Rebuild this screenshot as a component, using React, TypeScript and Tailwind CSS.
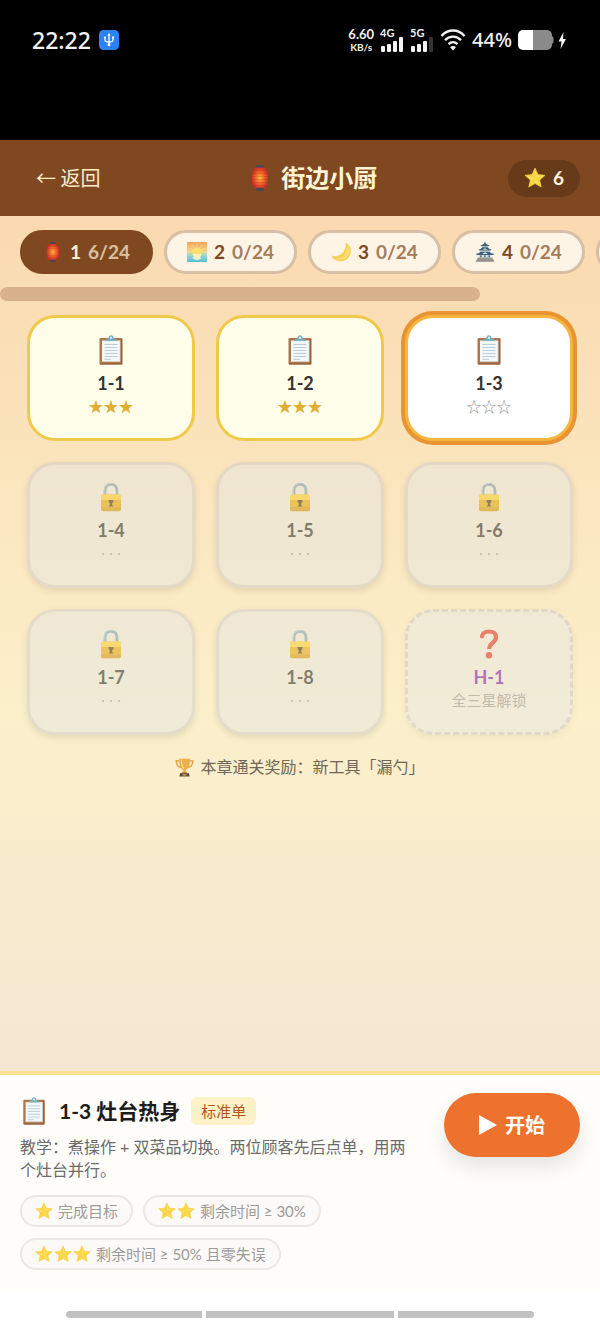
import { useId, useState } from "react";
import clsx from "clsx";

type IconProps = { className?: string };

/* ---------- icons ---------- */

function Lantern({ className }: IconProps) {
  const id = useId();
  return (
    <svg viewBox="0 0 24 24" className={className} aria-hidden>
      <defs>
        <radialGradient id={id} cx="50%" cy="50%" r="52%">
          <stop offset="0%" stopColor="#ffc24d" />
          <stop offset="40%" stopColor="#f5792d" />
          <stop offset="100%" stopColor="#cf2f24" />
        </radialGradient>
      </defs>
      <rect x="8.500" y="0.300" width="7" height="2.500" rx="0.600" fill="#3f4a5a" />
      <path d="M7.500 2.400h9c2 1.500 3 5 3 9.600s-1 8.100-3 9.600h-9c-2-1.500-3-5-3-9.600s1-8.100 3-9.600z" fill={`url(#${id})`} />
      <path
        d="M6 5h12M5 7.800h14M4.600 10.600h14.800M4.600 13.400h14.800M5 16.200h14M6 19h12"
        stroke="#b3241c"
        strokeWidth="0.400"
        opacity="0.600"
      />
      <rect x="8.500" y="21.300" width="7" height="2.400" rx="0.600" fill="#3f4a5a" />
    </svg>
  );
}

function Sunrise({ className }: IconProps) {
  const id = useId();
  return (
    <svg viewBox="0 0 24 24" className={className} aria-hidden>
      <defs>
        <linearGradient id={id} x1="0" y1="0" x2="0" y2="1">
          <stop offset="0%" stopColor="#f3a35c" />
          <stop offset="45%" stopColor="#fbd07c" />
          <stop offset="62%" stopColor="#a5dcc8" />
          <stop offset="100%" stopColor="#55bfd6" />
        </linearGradient>
      </defs>
      <rect width="24" height="24" rx="1" fill={`url(#${id})`} />
      <path
        d="M12 12V2M12 12L6 3M12 12l6-9M12 12L2 7M12 12l10-5M12 12H1.500M12 12h10.500"
        stroke="#fff0a8"
        strokeWidth="0.900"
        opacity="0.700"
      />
      <circle cx="12" cy="12.500" r="5.500" fill="#ffe169" />
      <path d="M6.500 14.500h11l-1.500 3.500 1 2-5 2-5-2 1-2z" fill="#fdf6cf" opacity="0.850" />
    </svg>
  );
}

function Moon({ className }: IconProps) {
  return (
    <svg viewBox="0 0 24 24" className={className} aria-hidden>
      <path d="M17.500.500c4 2 6.300 5.800 6.300 10.200 0 7-5.500 12.300-12.300 12.300C6.500 23 2.200 20.600 0 16.300c2.200.900 4.400 1.100 6.500.700C13.800 15.700 18.700 9 17.500.500z" fill="#f7cf4f" />
      <path d="M19.300 3.500c2 2 3 4.300 3 7.200 0 6-4.700 10.500-10.800 10.500-2.800 0-5.200-.8-7.200-2.300 9.300 1.500 16.300-5 15-15.400z" fill="#fbdf74" />
    </svg>
  );
}

function Castle({ className }: IconProps) {
  return (
    <svg viewBox="0 0 24 24" className={className} aria-hidden>
      <path d="M8 4h8v3H8zM6.500 9h11v3H6.500zM4.500 14.500h15v4h-15z" fill="#cfdadf" />
      <path d="M6.500 4.200C9.300 3.800 10.700 2 12 0c1.300 2 2.700 3.800 5.500 4.200l-1.500 1H8z" fill="#3b6078" />
      <path d="M4 9c2.500-.3 4-1.200 4.800-2.700h6.400C16 7.800 17.500 8.700 20 9l-1.500 1.200h-13z" fill="#3b6078" />
      <path d="M.8 14.300C4 14 5.500 13 6.500 11.700h11c1 1.300 2.500 2.300 5.700 2.600L21.500 15.700h-19z" fill="#3b6078" />
      <path d="M9 9.200l3-1.700 3 1.700zM8.500 14.500l3.500-2.200 3.500 2.200z" fill="#dbe4e8" />
      <path d="M7 16v2.500M12 16v2.500M17 16v2.500" stroke="#3b6078" strokeWidth="1.500" />
      <path d="M3.500 18.500h17L23.500 24H.500z" fill="#a5a59e" />
      <path d="M2.500 20.300h19M1.500 22.200h21M6 18.500v2M10 18.500v2M14 18.500v2M18 18.500v2M4 20.300v2M8 20.300v2M12 20.300v2M16 20.300v2M20 20.300v2" stroke="#777973" strokeWidth="0.500" />
    </svg>
  );
}

function Star({ className }: IconProps) {
  return (
    <svg viewBox="0 0 24 24" className={className} aria-hidden>
      <path
        d="M12 1.200l3.200 7.100 7.700.8-5.800 5.200 1.700 7.600L12 18l-6.800 3.900 1.700-7.600L1.100 9.100l7.700-.8z"
        fill="#fcd53f"
        stroke="#f8cb3a"
        strokeWidth="0.800"
        strokeLinejoin="round"
      />
      <path d="M12 3l2.400 6L12 12zM12 12L3 9.800l5 4.500zM12 12l5.200 8L12 17zM12 12l9-2.200-6-.8z" fill="#fbe27a" opacity="0.700" />
    </svg>
  );
}

function Clipboard({ className }: IconProps) {
  return (
    <svg viewBox="0 0 24 30" className={className} aria-hidden>
      <rect x="0.500" y="3" width="23" height="26.500" rx="1.200" fill="#b0764a" />
      <path d="M22.500 4v24.800H1" fill="none" stroke="#925f3b" strokeWidth="1.200" />
      <path d="M3 5.500h18v21H3z" fill="#f4f8fb" />
      <path d="M21 5.500v21H3" fill="none" stroke="#cbd8e0" strokeWidth="0.800" />
      <path d="M5.500 9.500h13M5.500 12.500h13M5.500 15.500h13M5.500 18.500h13M5.500 21.500h13M5.500 24.300h6.500" stroke="#b3c7d8" strokeWidth="0.900" />
      <path d="M6.500 6c0-1.700 1-2.400 2.700-2.400C9.500 1.500 10.500.300 12 .300s2.500 1.200 2.800 3.300c1.700 0 2.700.7 2.700 2.400z" fill="#79b1c4" />
      <circle cx="12" cy="2.800" r="1.100" fill="#e8f3f6" />
    </svg>
  );
}

function Lock({ className }: IconProps) {
  return (
    <svg viewBox="0 0 24 30" className={className} aria-hidden>
      <path d="M6 15V8.500C6 4.700 8.300 2.300 12 2.300s6 2.400 6 6.200V15" fill="none" stroke="#7fa3b3" strokeWidth="2.800" />
      <path d="M5.200 13V8.500C5.200 4.500 7.800 1.600 12 1.600" fill="none" stroke="#a9c6d0" strokeWidth="1" />
      <rect x="2" y="12.500" width="20" height="16.500" rx="2.500" fill="#e2aa18" />
      <path d="M2 18v-3c0-1.600 1-2.500 2.500-2.500h15c1.600 0 2.500 1 2.500 2.500v3z" fill="#f9ce38" />
      <path d="M2 25.500h20V27c0 1.400-1 2.300-2.500 2.300h-15C3 29.300 2 28.400 2 27z" fill="#d0981a" />
      <path d="M9.600 18h4.800v2l-1.200 1v2l1.200 1.500H9.600l1.200-1.500v-2l-1.200-1z" fill="#4a3a1c" />
    </svg>
  );
}

function Question({ className }: IconProps) {
  return (
    <svg viewBox="0 0 24 30" className={className} aria-hidden>
      <path
        d="M5 7.500C5.500 4 8.200 2.500 12 2.500c4.300 0 7 2.100 7 5.500 0 3-1.500 4.500-3.600 6.200-1.900 1.500-3 3-3.200 6"
        fill="none"
        stroke="#dc3a30"
        strokeWidth="4.200"
      />
      <circle cx="12" cy="26.300" r="3.200" fill="#dc3a30" />
      <circle cx="5" cy="7.500" r="2.100" fill="#dc3a30" />
    </svg>
  );
}

function Trophy({ className }: IconProps) {
  return (
    <svg viewBox="0 0 24 24" className={className} aria-hidden>
      <path d="M6 3.500H1.500c0 5 2 8 6.500 8.500M18 3.500h4.500c0 5-2 8-6.500 8.500" fill="none" stroke="#dc9c38" strokeWidth="1.600" />
      <path d="M5 1h14c0 8-1.700 13-5.500 14.300V18h-3v-2.700C6.700 14 5 9 5 1z" fill="#eeb04b" />
      <path d="M8 2c0 5.500.8 9 3 11.500" fill="none" stroke="#fbdc94" strokeWidth="1.500" />
      <path d="M9 17.500h6l1 2H8z" fill="#cf8d2f" />
      <path d="M6.500 19.300h11l1 4.200h-13z" fill="#5a4638" />
      <path d="M9.500 20.700h5v1.500h-5z" fill="#e9b85a" />
    </svg>
  );
}

function Signal({ weak }: { weak?: boolean }) {
  return (
    <svg viewBox="0 0 24 15" className="h-[15px] w-6" aria-hidden>
      <rect x="1" y="9" width="4" height="6" rx="1" fill="#f2f2f2" />
      <rect x="7" y="7" width="4" height="8" rx="1" fill="#f2f2f2" />
      <rect x="13" y="4" width="4" height="11" rx="1" fill="#f2f2f2" />
      <rect x="19" y="0" width="4" height="15" rx="1" fill={weak ? "#333" : "#f2f2f2"} />
    </svg>
  );
}

/* ---------- data ---------- */

const CHAPTERS = [
  { no: 1, done: 6, Icon: Lantern },
  { no: 2, done: 0, Icon: Sunrise },
  { no: 3, done: 0, Icon: Moon },
  { no: 4, done: 0, Icon: Castle },
];

type Level = { id: string; state: "done" | "open" | "locked" | "hidden"; note: string };

const LEVELS: Level[] = [
  { id: "1-1", state: "done", note: "★★★" },
  { id: "1-2", state: "done", note: "★★★" },
  { id: "1-3", state: "open", note: "☆☆☆" },
  { id: "1-4", state: "locked", note: "· · ·" },
  { id: "1-5", state: "locked", note: "· · ·" },
  { id: "1-6", state: "locked", note: "· · ·" },
  { id: "1-7", state: "locked", note: "· · ·" },
  { id: "1-8", state: "locked", note: "· · ·" },
  { id: "H-1", state: "hidden", note: "全三星解锁" },
];

const GOALS = [
  { stars: 1, text: "完成目标" },
  { stars: 2, text: "剩余时间 ≥ 30%" },
  { stars: 3, text: "剩余时间 ≥ 50% 且零失误" },
];

const LEVEL_ICON = { done: Clipboard, open: Clipboard, locked: Lock, hidden: Question };

/* ---------- sections ---------- */

function StatusBar() {
  return (
    <div className="flex h-[140px] items-start justify-between bg-black px-8 pt-[25px] font-['Noto_Sans',sans-serif] text-[#f2f2f2]">
      <div className="flex h-[30px] items-center gap-2">
        <span className="text-[23px] font-medium">22:22</span>
        <svg viewBox="0 0 20 20" className="size-5" aria-hidden>
          <rect width="20" height="20" rx="4.500" fill="#2a82f5" />
          <path d="M10 4.500v9.500M6 7.500v2.200c0 1.500 1.200 2.300 4 2.300s4-.8 4-2.300V7.500" fill="none" stroke="#fff" strokeWidth="1.300" />
          <path d="M10 3l1.700 2.500H8.300z" fill="#fff" />
          <circle cx="10" cy="14.700" r="1.500" fill="#fff" />
          <circle cx="6" cy="7.500" r="1.100" fill="#fff" />
          <rect x="13" y="6.500" width="2" height="2" fill="#fff" />
        </svg>
      </div>
      <div className="flex h-[30px] items-center gap-[6px]">
        <div className="flex flex-col items-center font-[Lato,sans-serif] font-bold">
          <span className="text-[13px] leading-[14px]">6.60</span>
          <span className="text-[10px] leading-3">KB/s</span>
        </div>
        <div className="flex flex-col font-[Lato,sans-serif] text-[11px] font-bold leading-[8px]">
          <span>4G</span>
          <Signal />
        </div>
        <div className="flex flex-col font-[Lato,sans-serif] text-[11px] font-bold leading-[8px]">
          <span>5G</span>
          <Signal weak />
        </div>
        <svg viewBox="0 0 26 22" className="h-[22px] w-[26px]" aria-hidden>
          <g fill="none" stroke="#f2f2f2" strokeWidth="2.400">
            <path d="M1.500 7C8-.3 18-.3 24.500 7" />
            <path d="M5 11.200c4.700-4.800 11.300-4.800 16 0" />
            <path d="M8.500 15.200c2.700-2.600 6.300-2.600 9 0" />
          </g>
          <path d="M10 18c1.800-1.400 4.200-1.400 6 0l-3 3.500z" fill="#f2f2f2" />
        </svg>
        <span className="text-xl font-medium">44%</span>
        <svg viewBox="0 0 50 20" className="h-5 w-[50px]" aria-hidden>
          <path d="M15 0h14a5 5 0 0 1 5 5v1l1.500 1.500v5L34 14v1a5 5 0 0 1-5 5H15z" fill="#8a8a8a" />
          <path d="M5 0h10v20H5a5 5 0 0 1-5-5V5a5 5 0 0 1 5-5z" fill="#fff" />
          <path d="M45.500 2l-5 9.500h3L42.500 19l5.500-10h-3z" fill="#f2f2f2" />
        </svg>
      </div>
    </div>
  );
}

function Header() {
  return (
    <header className="flex h-[76px] items-center justify-between bg-[#804820] px-5 text-[#fdecc8]">
      <button type="button" className="px-4 font-['Noto_Sans_CJK_SC',sans-serif] text-xl">
        ← 返回
      </button>
      <h1 className="flex items-center gap-2 text-2xl font-bold text-[#fff3d6]">
        <Lantern className="size-[26px]" />
        街边小厨
      </h1>
      <div className="flex h-[37px] items-center gap-[7px] rounded-full bg-[#673a1a] px-4 text-[19px] font-bold text-[#fff3d6]">
        <Star className="size-[22px]" />
        6
      </div>
    </header>
  );
}

function ChapterTabs({ current, onPick }: { current: number; onPick: (no: number) => void }) {
  return (
    <nav className="pt-[14px]">
      <div className="flex gap-[11px] overflow-x-auto px-5 pb-[13px] [scrollbar-width:none]">
        {CHAPTERS.map(({ no, done, Icon }) => (
          <button
            key={no}
            type="button"
            onClick={() => onPick(no)}
            className={clsx(
              "flex h-11 shrink-0 items-center gap-[7px] rounded-full border-[3px] px-5 text-[19px] font-bold",
              no === current
                ? "border-[#804820] bg-[#804820] text-[#fff3d6]"
                : "border-[#d6bfa4] bg-[#fdf4e5] text-[#804820]"
            )}
          >
            <Icon className="size-5" />
            <span>{no}</span>
            <span className="opacity-70">{done}/24</span>
          </button>
        ))}
        {/* next chapter, not open yet */}
        <button
          type="button"
          disabled
          className="h-11 w-[133px] shrink-0 rounded-full border-[3px] border-[#d6bfa4] bg-[#fdf4e5]"
        />
      </div>
      {/* scroll position */}
      <div className="h-[14px] w-4/5 rounded-full bg-[#d8b28a]" />
    </nav>
  );
}

function LevelCard({ level, active, onPick }: { level: Level; active: boolean; onPick: () => void }) {
  const Icon = LEVEL_ICON[level.state];
  const locked = level.state === "locked" || level.state === "hidden";
  return (
    <button
      type="button"
      onClick={onPick}
      disabled={locked}
      className={clsx(
        "flex flex-col items-center rounded-[28px] border-[3px] pt-[14px] pb-6",
        level.state === "done" && "border-[#efc94a] bg-[#fffeeb]",
        level.state === "open" && "border-[#f6b53f] bg-white",
        level.state === "locked" && "border-[#d6d1ca] bg-[#e9e7de] opacity-60 shadow-[0_3px_6px_rgba(0,0,0,0.15)]",
        level.state === "hidden" && "border-dashed border-[#cfccc6] bg-[#ebe9e0] opacity-60 shadow-[0_3px_6px_rgba(0,0,0,0.08)]",
        active && "ring-4 ring-[#e99434]"
      )}
    >
      <span className="flex h-9 items-center">
        <Icon className="h-[30px] w-6" />
      </span>
      <span
        className={clsx(
          "text-lg font-bold leading-[30px]",
          level.state === "hidden" ? "text-[#7b1fb2]" : "text-[#333]"
        )}
      >
        {level.id}
      </span>
      <span
        className={clsx(
          "text-[15px] leading-4",
          level.state === "locked" ? "font-['Noto_Sans',sans-serif]" : "font-['Noto_Sans_CJK_SC',sans-serif]",
          level.state === "done" ? "text-[#e0ae33]" : "text-[#999]"
        )}
      >
        {level.note}
      </span>
    </button>
  );
}

function LevelPanel() {
  return (
    <section className="flex items-start gap-7 border-t-4 border-[#f7e291] bg-[#fefdf9] px-5 pt-[18px] pb-5">
      <div className="min-w-0 flex-1">
        <div className="flex h-9 items-center gap-[11px]">
          <Clipboard className="h-7 w-7" />
          <h2 className="text-[21px] font-bold text-[#1c1c1c]">1-3 灶台热身</h2>
          <span className="rounded-md bg-[#fcf1c7] px-[10px] text-[15px] leading-7 text-[#b3561c]">标准单</span>
        </div>
        <p className="mt-[6px] leading-[23px] text-[#6b6b6b]">
          教学：煮操作 + 双菜品切换。两位顾客先后点单，用两个灶台并行。
        </p>
        <ul className="mt-[14px] flex flex-wrap gap-x-[10px] gap-y-[11px]">
          {GOALS.map((g) => (
            <li
              key={g.stars}
              className="flex h-8 items-center gap-[5px] rounded-full border-2 border-[#e8e8e5] bg-[#fbfaf8] px-[13px] text-[15px] text-[#9b9b9b]"
            >
              <span className="flex gap-px">
                {Array.from({ length: g.stars }, (_, i) => (
                  <Star key={i} className="size-[18px]" />
                ))}
              </span>
              {g.text}
            </li>
          ))}
        </ul>
      </div>
      <button
        type="button"
        className="flex h-16 items-center gap-2 rounded-full bg-[#ec722e] px-[35px] text-xl font-bold text-white shadow-[0_10px_20px_rgba(0,0,0,0.10)]"
      >
        <svg viewBox="0 0 18 20" className="h-5 w-[18px]" aria-hidden>
          <path d="M0 0l18 10L0 20z" fill="#fff" />
        </svg>
        开始
      </button>
    </section>
  );
}

function GestureBar() {
  return (
    <div className="flex h-[30px] items-end gap-1 bg-white px-[66px] pb-[2px]">
      <div className="h-[7px] flex-[8] rounded-l-full bg-[#c2c2c2]" />
      <div className="h-[7px] flex-[11] bg-[#c2c2c2]" />
      <div className="h-[7px] flex-[8] rounded-r-full bg-[#c2c2c2]" />
    </div>
  );
}

export default function App() {
  const [chapter, setChapter] = useState(1);
  const [picked, setPicked] = useState("1-3");

  return (
    <div className="flex min-h-screen flex-col font-[Lato,'Noto_Sans_CJK_SC',sans-serif]">
      <StatusBar />
      <Header />
      <main className="flex-1 bg-[linear-gradient(180deg,#fad9b0_0%,#fbf0ca_58%,#f5e6d2_100%)]">
        <ChapterTabs current={chapter} onPick={setChapter} />
        <div className="grid grid-cols-3 gap-[21px] px-[27px] pt-[14px]">
          {LEVELS.map((l) => (
            <LevelCard key={l.id} level={l} active={l.id === picked} onPick={() => setPicked(l.id)} />
          ))}
        </div>
        <p className="mt-5 flex items-center justify-center gap-[6px] text-[#6f6657]">
          <Trophy className="size-[19px]" />
          本章通关奖励：新工具「漏勺」
        </p>
      </main>
      <LevelPanel />
      <GestureBar />
    </div>
  );
}
